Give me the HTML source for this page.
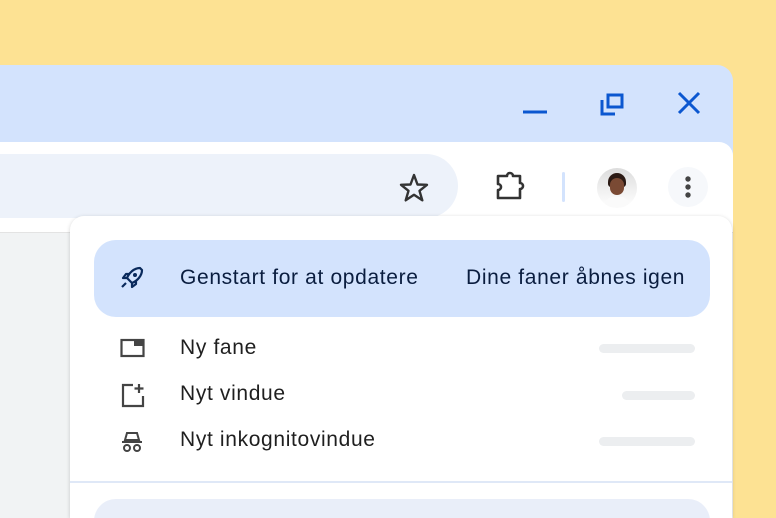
<!DOCTYPE html>
<html><head><style>
html,body{margin:0;width:776px;height:518px;overflow:hidden;}
body{background:#fde293;position:relative;font-family:"Liberation Sans",Arial,sans-serif;}
.win{position:absolute;left:0;top:65px;width:733px;height:453px;background:#d3e3fd;border-radius:0 16px 0 0;}
.tb{position:absolute;left:0;top:142px;width:733px;height:376px;background:#fff;border-radius:0 14px 0 0;}
.omni{position:absolute;left:0;top:154px;width:458px;height:64px;background:#edf2fa;border-radius:0 32px 32px 0;}
.content{position:absolute;left:0;top:232px;width:733px;height:285px;background:#f1f3f4;border-top:1px solid #e3e3e3;}
.menu{position:absolute;left:70px;top:216px;width:662px;height:302px;background:#fff;border-radius:14px 14px 0 0;box-shadow:0 1px 4px rgba(0,0,0,.18);overflow:hidden;}
.hl{position:absolute;left:24px;top:24px;width:616px;height:77px;background:#d3e3fd;border-radius:22px;}
.t{position:absolute;font-size:21px;letter-spacing:0.65px;color:#1f1f1f;white-space:nowrap;}
.bar{position:absolute;height:9px;background:#eceef0;border-radius:5px;}
svg{position:absolute;}
</style></head><body>
<div class="win"></div>
<svg style="left:520px;top:90px" width="30" height="30"><path d="M3 22H27" stroke="#0b57d0" stroke-width="3"/></svg>
<svg style="left:598px;top:90px" width="30" height="30"><path d="M10 5H24V17H10Z M4 10V24H17" fill="none" stroke="#0b57d0" stroke-width="3"/></svg>
<svg style="left:676px;top:90px" width="28" height="28"><path d="M3 3L23 23M23 3L3 23" stroke="#0b57d0" stroke-width="3"/></svg>
<div class="tb"></div>
<div class="omni"></div>
<svg style="left:398px;top:172px" width="34" height="32"><path d="M16 3L19.5 12.5L29 12.8L21.5 18.8L24.3 28.3L16 22.8L7.7 28.3L10.5 18.8L3 12.8L12.5 12.5Z" fill="none" stroke="#333" stroke-width="2.4" stroke-linejoin="round"/></svg>
<svg style="left:494px;top:170px" width="36" height="34"><path d="M4 6H13A3 3 0 0 1 19 6H26V13A3 3 0 0 1 26 19V28H4V20A3 3 0 0 0 4 14Z" fill="none" stroke="#333" stroke-width="2.6" stroke-linejoin="round"/></svg>
<div style="position:absolute;left:562px;top:172px;width:3px;height:30px;background:#d3e3fd;border-radius:2px"></div>
<div style="position:absolute;left:597px;top:168px;width:40px;height:40px;border-radius:50%;background:linear-gradient(#dcdcdc,#f2f2f2 60%,#fff);overflow:hidden">
<div style="position:absolute;left:11px;top:5px;width:18px;height:14px;background:#2b1a14;border-radius:9px 9px 3px 3px"></div>
<div style="position:absolute;left:13px;top:10px;width:14px;height:17px;background:#7a4a34;border-radius:7px"></div>
<div style="position:absolute;left:8px;top:29px;width:24px;height:11px;background:#fafafa;border-radius:8px 8px 0 0"></div></div>
<div style="position:absolute;left:668px;top:167px;width:40px;height:40px;border-radius:50%;background:#f6f8fb"></div>
<svg style="left:680px;top:174px" width="16" height="26"><circle cx="8" cy="5" r="2.7" fill="#444"/><circle cx="8" cy="13" r="2.7" fill="#444"/><circle cx="8" cy="21" r="2.7" fill="#444"/></svg>
<div class="content"></div>
<div class="menu">
<div class="hl"></div>
<svg style="left:48px;top:49px" width="28" height="28"><path d="M22 3C16 3 11 8 9 13L14 18C19 16 24 11 24 5Z M9 13L5 13L8 9L12 9 M14 18L14 22L18 19L18 15 M8 18L4 22" fill="none" stroke="#0a2a5c" stroke-width="2.2" stroke-linejoin="round"/><circle cx="17" cy="10" r="2" fill="#0a2a5c"/></svg>
<div class="t" style="left:110px;top:50px;color:#0a1d3f">Genstart for at opdatere</div>
<div class="t" style="left:396px;top:50px;color:#0a1d3f">Dine faner åbnes igen</div>
<svg style="left:50px;top:122px" width="26" height="22"><rect x="1.5" y="2" width="22" height="16" fill="none" stroke="#444" stroke-width="2.2"/><rect x="14" y="2" width="10" height="6" fill="#444"/></svg>
<div class="t" style="left:110px;top:120px">Ny fane</div>
<div class="bar" style="left:529px;top:128px;width:96px"></div>
<svg style="left:50px;top:166px" width="26" height="26"><path d="M13 3H3V24H23V14 M19 2V11 M14.5 6.5H23.5" fill="none" stroke="#444" stroke-width="2.2"/></svg>
<div class="t" style="left:110px;top:166px">Nyt vindue</div>
<div class="bar" style="left:552px;top:175px;width:73px"></div>
<svg style="left:50px;top:214px" width="26" height="24"><path d="M7 3H17L19 10H5Z M2 12H22" fill="none" stroke="#444" stroke-width="2"/><circle cx="7" cy="18" r="3" fill="none" stroke="#444" stroke-width="2"/><circle cx="17" cy="18" r="3" fill="none" stroke="#444" stroke-width="2"/></svg>
<div class="t" style="left:110px;top:212px">Nyt inkognitovindue</div>
<div class="bar" style="left:529px;top:221px;width:96px"></div>
<div style="position:absolute;left:0;top:265px;width:662px;height:2px;background:#dfe8f7"></div>
<div style="position:absolute;left:24px;top:283px;width:616px;height:40px;background:#e9eef9;border-radius:22px 22px 0 0"></div>
</div>
</body></html>
